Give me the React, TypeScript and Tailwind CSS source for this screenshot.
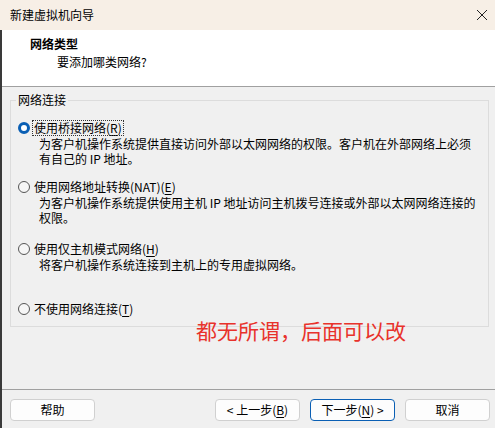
const font = { fontFamily: '"Microsoft YaHei UI", "Noto Sans CJK SC", "Noto Sans", sans-serif' };

type Option = {
  label: string;
  key: string;
  desc: string[];
  checked?: boolean;
  gap: string;
};

const options: Option[] = [
  {
    label: "使用桥接网络",
    key: "R",
    desc: ["为客户机操作系统提供直接访问外部以太网网络的权限。客户机在外部网络上必须", "有自己的 IP 地址。"],
    checked: true,
    gap: "mt-0",
  },
  {
    label: "使用网络地址转换(NAT)",
    key: "E",
    desc: ["为客户机操作系统提供使用主机 IP 地址访问主机拨号连接或外部以太网网络连接的", "权限。"],
    gap: "mt-[13px]",
  },
  {
    label: "使用仅主机模式网络",
    key: "H",
    desc: ["将客户机操作系统连接到主机上的专用虚拟网络。"],
    gap: "mt-[16px]",
  },
  {
    label: "不使用网络连接",
    key: "T",
    desc: [],
    gap: "mt-[29px]",
  },
];

function Radio({ checked }: { checked?: boolean }) {
  return checked ? (
    <span className="w-[12px] h-[12px] rounded-full border-[3px] border-[#0a5fb4] bg-white shrink-0" />
  ) : (
    <span className="w-[12px] h-[12px] rounded-full border border-[#555] bg-[#f6f6f6] shrink-0" />
  );
}

function Button({ children, primary }: { children: React.ReactNode; primary?: boolean }) {
  return (
    <button
      className={
        "w-[85px] h-[22px] rounded-[4px] bg-[#fdfdfd] text-[12px] text-black flex items-center justify-center leading-none " +
        (primary ? "border border-[#0a5fb4]" : "border border-[#d0d0d0]")
      }
    >
      {children}
    </button>
  );
}

export default function App() {
  return (
    <div className="relative w-[495px] h-[428px] bg-[#f0f0f0] text-[12px] text-black overflow-hidden" style={font}>
      {/* title bar */}
      <div className="h-[30px] bg-[#f7efe6] flex items-center justify-between pl-[10px] pr-[5px]">
        <span className="text-[12px]">新建虚拟机向导</span>
        <svg width="14" height="14" viewBox="0 0 14 14" className="mr-[1px]">
          <path d="M2 2L12 12M12 2L2 12" stroke="#222" strokeWidth="1" />
        </svg>
      </div>

      <div className="flex h-[398px]">
        <div className="w-[2px] bg-[#3a3a3a]" />
        <div className="flex-1 flex flex-col">
          {/* header */}
          <div className="h-[57px] bg-white border-b border-[#a0a0a0] pl-[28px] pt-[6px]">
            <div className="font-bold leading-[16px]">网络类型</div>
            <div className="pl-[27px] mt-[2px] leading-[16px]">要添加哪类网络?</div>
          </div>

          {/* group box */}
          <div className="relative mt-[13px] ml-[8px] mr-[6px] h-[227px] border border-[#dcdcdc]">
            <span className="absolute -top-[9px] left-[5px] px-[2px] bg-[#f0f0f0] leading-[16px]">网络连接</span>
            <div className="pl-[7px] pt-[19px] flex flex-col">
              {options.map((o) => (
                <div key={o.key} className={"flex flex-col " + o.gap}>
                  <div className="flex items-center h-[16px]">
                    <Radio checked={o.checked} />
                    <span
                      className={
                        "ml-[3px] px-[1px] leading-[14px] " +
                        (o.checked ? "outline outline-1 outline-dotted outline-[#333]" : "")
                      }
                    >
                      {o.label}(<span className="underline underline-offset-2">{o.key}</span>)
                    </span>
                  </div>
                  {o.desc.map((d) => (
                    <span key={d} className="block ml-[21px] leading-[15px]">
                      {d}
                    </span>
                  ))}
                </div>
              ))}
            </div>
          </div>

          {/* footer */}
          <div className="mt-[62px] border-t border-[#a0a0a0] flex-1 flex items-start pt-[9px] pl-[8px] pr-[5px]">
            <Button>帮助</Button>
            <div className="ml-auto flex gap-[10px]">
              <Button>
                &lt; 上一步(<span className="underline underline-offset-2">B</span>)
              </Button>
              <Button primary>
                下一步(<span className="underline underline-offset-2">N</span>) &gt;
              </Button>
              <Button>取消</Button>
            </div>
          </div>
        </div>
      </div>

      {/* annotation */}
      <div className="absolute left-[196px] top-[316px] text-[21px] leading-[28px] text-[#e8322b]">
        都无所谓，后面可以改
      </div>
    </div>
  );
}
